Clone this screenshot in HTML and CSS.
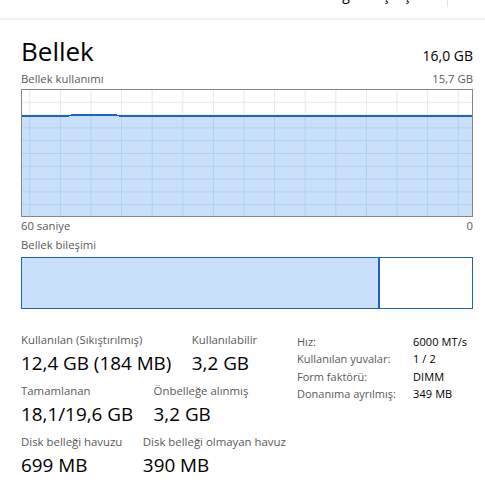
FILE: index.html
```html
<!DOCTYPE html>
<html lang="tr">
<head>
<meta charset="utf-8">
<link rel="stylesheet" href="styles.css">
</head>
<body>
<div class="toolbar">
  <span class="tb-text">Yeni görev çalıştır</span>
  <span class="tb-sep"></span>
</div>
<main class="content">
  <div class="title-row">
    <h1 class="title">Bellek</h1>
    <span class="total">16,0 GB</span>
  </div>
  <div class="cap-row top-cap">
    <span>Bellek kullanımı</span>
    <span>15,7 GB</span>
  </div>
  <div class="chart">
    <svg class="chart-svg" width="450" height="126" viewBox="0 0 450 126">
      <defs>
        <pattern id="gridWhite" patternUnits="userSpaceOnUse" x="7.3" y="-1" width="30.6" height="12.8">
          <rect width="30.6" height="12.8" fill="#ffffff"/>
          <rect x="0" y="0" width="1" height="12.8" fill="#e8e8e8"/>
          <rect x="0" y="0" width="30.6" height="1" fill="#e8e8e8"/>
        </pattern>
        <pattern id="gridBlue" patternUnits="userSpaceOnUse" x="7.3" y="-1" width="30.6" height="12.8">
          <rect width="30.6" height="12.8" fill="#c9e0fb"/>
          <rect x="0" y="0" width="1" height="12.8" fill="#b3cfef"/>
          <rect x="0" y="0" width="30.6" height="1" fill="#b3cfef"/>
        </pattern>
      </defs>
      <rect width="450" height="126" fill="url(#gridWhite)"/>
      <path d="M0 26 L46 26 L50 25 L94 25 L98 26 L450 26 L450 126 L0 126 Z" fill="url(#gridBlue)"/>
      <polyline points="0,26 46,26 50,25 94,25 98,26 450,26" fill="none" stroke="#1f62bf" stroke-width="1.5"/>
    </svg>
  </div>
  <div class="cap-row axis">
    <span>60 saniye</span>
    <span>0</span>
  </div>
  <div class="cap-row comp-cap">
    <span>Bellek bileşimi</span>
  </div>
  <div class="comp">
    <div class="comp-used" style="width: 79.6%"></div>
    <div class="comp-free"></div>
  </div>
  <section class="stats">
    <div class="stats-left">
      <div class="stat-row">
        <div class="stat"><div class="stat-label">Kullanılan (Sıkıştırılmış)</div><div class="stat-value">12,4 GB (184 MB)</div></div>
        <div class="stat"><div class="stat-label">Kullanılabilir</div><div class="stat-value">3,2 GB</div></div>
      </div>
      <div class="stat-row">
        <div class="stat"><div class="stat-label">Tamamlanan</div><div class="stat-value">18,1/19,6 GB</div></div>
        <div class="stat"><div class="stat-label">Önbelleğe alınmış</div><div class="stat-value">3,2 GB</div></div>
      </div>
      <div class="stat-row">
        <div class="stat"><div class="stat-label">Disk belleği havuzu</div><div class="stat-value">699 MB</div></div>
        <div class="stat"><div class="stat-label">Disk belleği olmayan havuz</div><div class="stat-value">390 MB</div></div>
      </div>
    </div>
    <dl class="stats-right">
      <dt>Hız:</dt><dd>6000 MT/s</dd>
      <dt>Kullanılan yuvalar:</dt><dd>1 / 2</dd>
      <dt>Form faktörü:</dt><dd>DIMM</dd>
      <dt>Donanıma ayrılmış:</dt><dd>349 MB</dd>
    </dl>
  </section>
</main>
</body>
</html>
```
FILE: styles.css
```css
* { box-sizing: border-box; }
html, body { margin: 0; padding: 0; background: #ffffff; }
body {
  font-family: "Open Sans", "Noto Sans", sans-serif;
  color: #000;
  width: 485px;
  height: 484px;
  overflow: hidden;
}
.toolbar {
  height: 20px;
  overflow: hidden;
  display: flex;
  justify-content: flex-end;
  align-items: flex-start;
  border-bottom: 2px solid #f1f1f1;
}
.tb-text {
  font-size: 14px;
  line-height: 14px;
  margin-top: -12px;
  white-space: nowrap;
}
.tb-sep {
  width: 1px;
  height: 7px;
  background: #e2e2e2;
  margin-left: 22px;
  margin-right: 37px;
}
.content {
  padding: 15px 12px 0 21px;
}
.title-row {
  display: flex;
  justify-content: space-between;
  align-items: baseline;
  height: 32px;
}
.title {
  margin: 0;
  font-size: 26px;
  line-height: 32px;
  font-weight: 400;
}
.total {
  font-size: 14px;
  line-height: 32px;
}
.cap-row {
  display: flex;
  justify-content: space-between;
  font-size: 11.3px;
  line-height: 16px;
  color: #5a5a5a;
}
.top-cap { margin-top: 4px; }
.chart {
  margin-top: 2px;
  height: 128px;
  border: 1px solid #868686;
}
.chart-svg { display: block; shape-rendering: crispEdges; }
.axis { margin-top: 1px; }
.comp-cap { margin-top: 3px; }
.comp {
  margin-top: 4px;
  height: 52px;
  border: 1px solid #1f62bf;
  display: flex;
}
.comp-used {
  background: #c9e0fb;
  border-right: 2px solid #1f62bf;
}
.comp-free { flex: 1; background: #fff; }
.stats {
  margin-top: 23px;
  display: flex;
}
.stats-left {
  flex: 1;
  display: flex;
  flex-direction: column;
  gap: 8px;
}
.stat-row {
  display: flex;
  gap: 20.5px;
}
.stat-label {
  font-size: 11.4px;
  line-height: 16px;
  color: #5a5a5a;
  white-space: nowrap;
}
.stat-value {
  margin-top: 3px;
  font-size: 18.85px;
  line-height: 24px;
  white-space: nowrap;
}
.stats-right {
  margin: 1px 0 0;
  width: 176px;
  display: grid;
  grid-template-columns: 116px auto;
  grid-auto-rows: 17.3px;
  align-content: start;
  font-size: 11px;
  line-height: 17px;
}
.stats-right dt { color: #5a5a5a; white-space: nowrap; }
.stats-right dd { margin: 0; white-space: nowrap; letter-spacing: 0.1px; }
```
